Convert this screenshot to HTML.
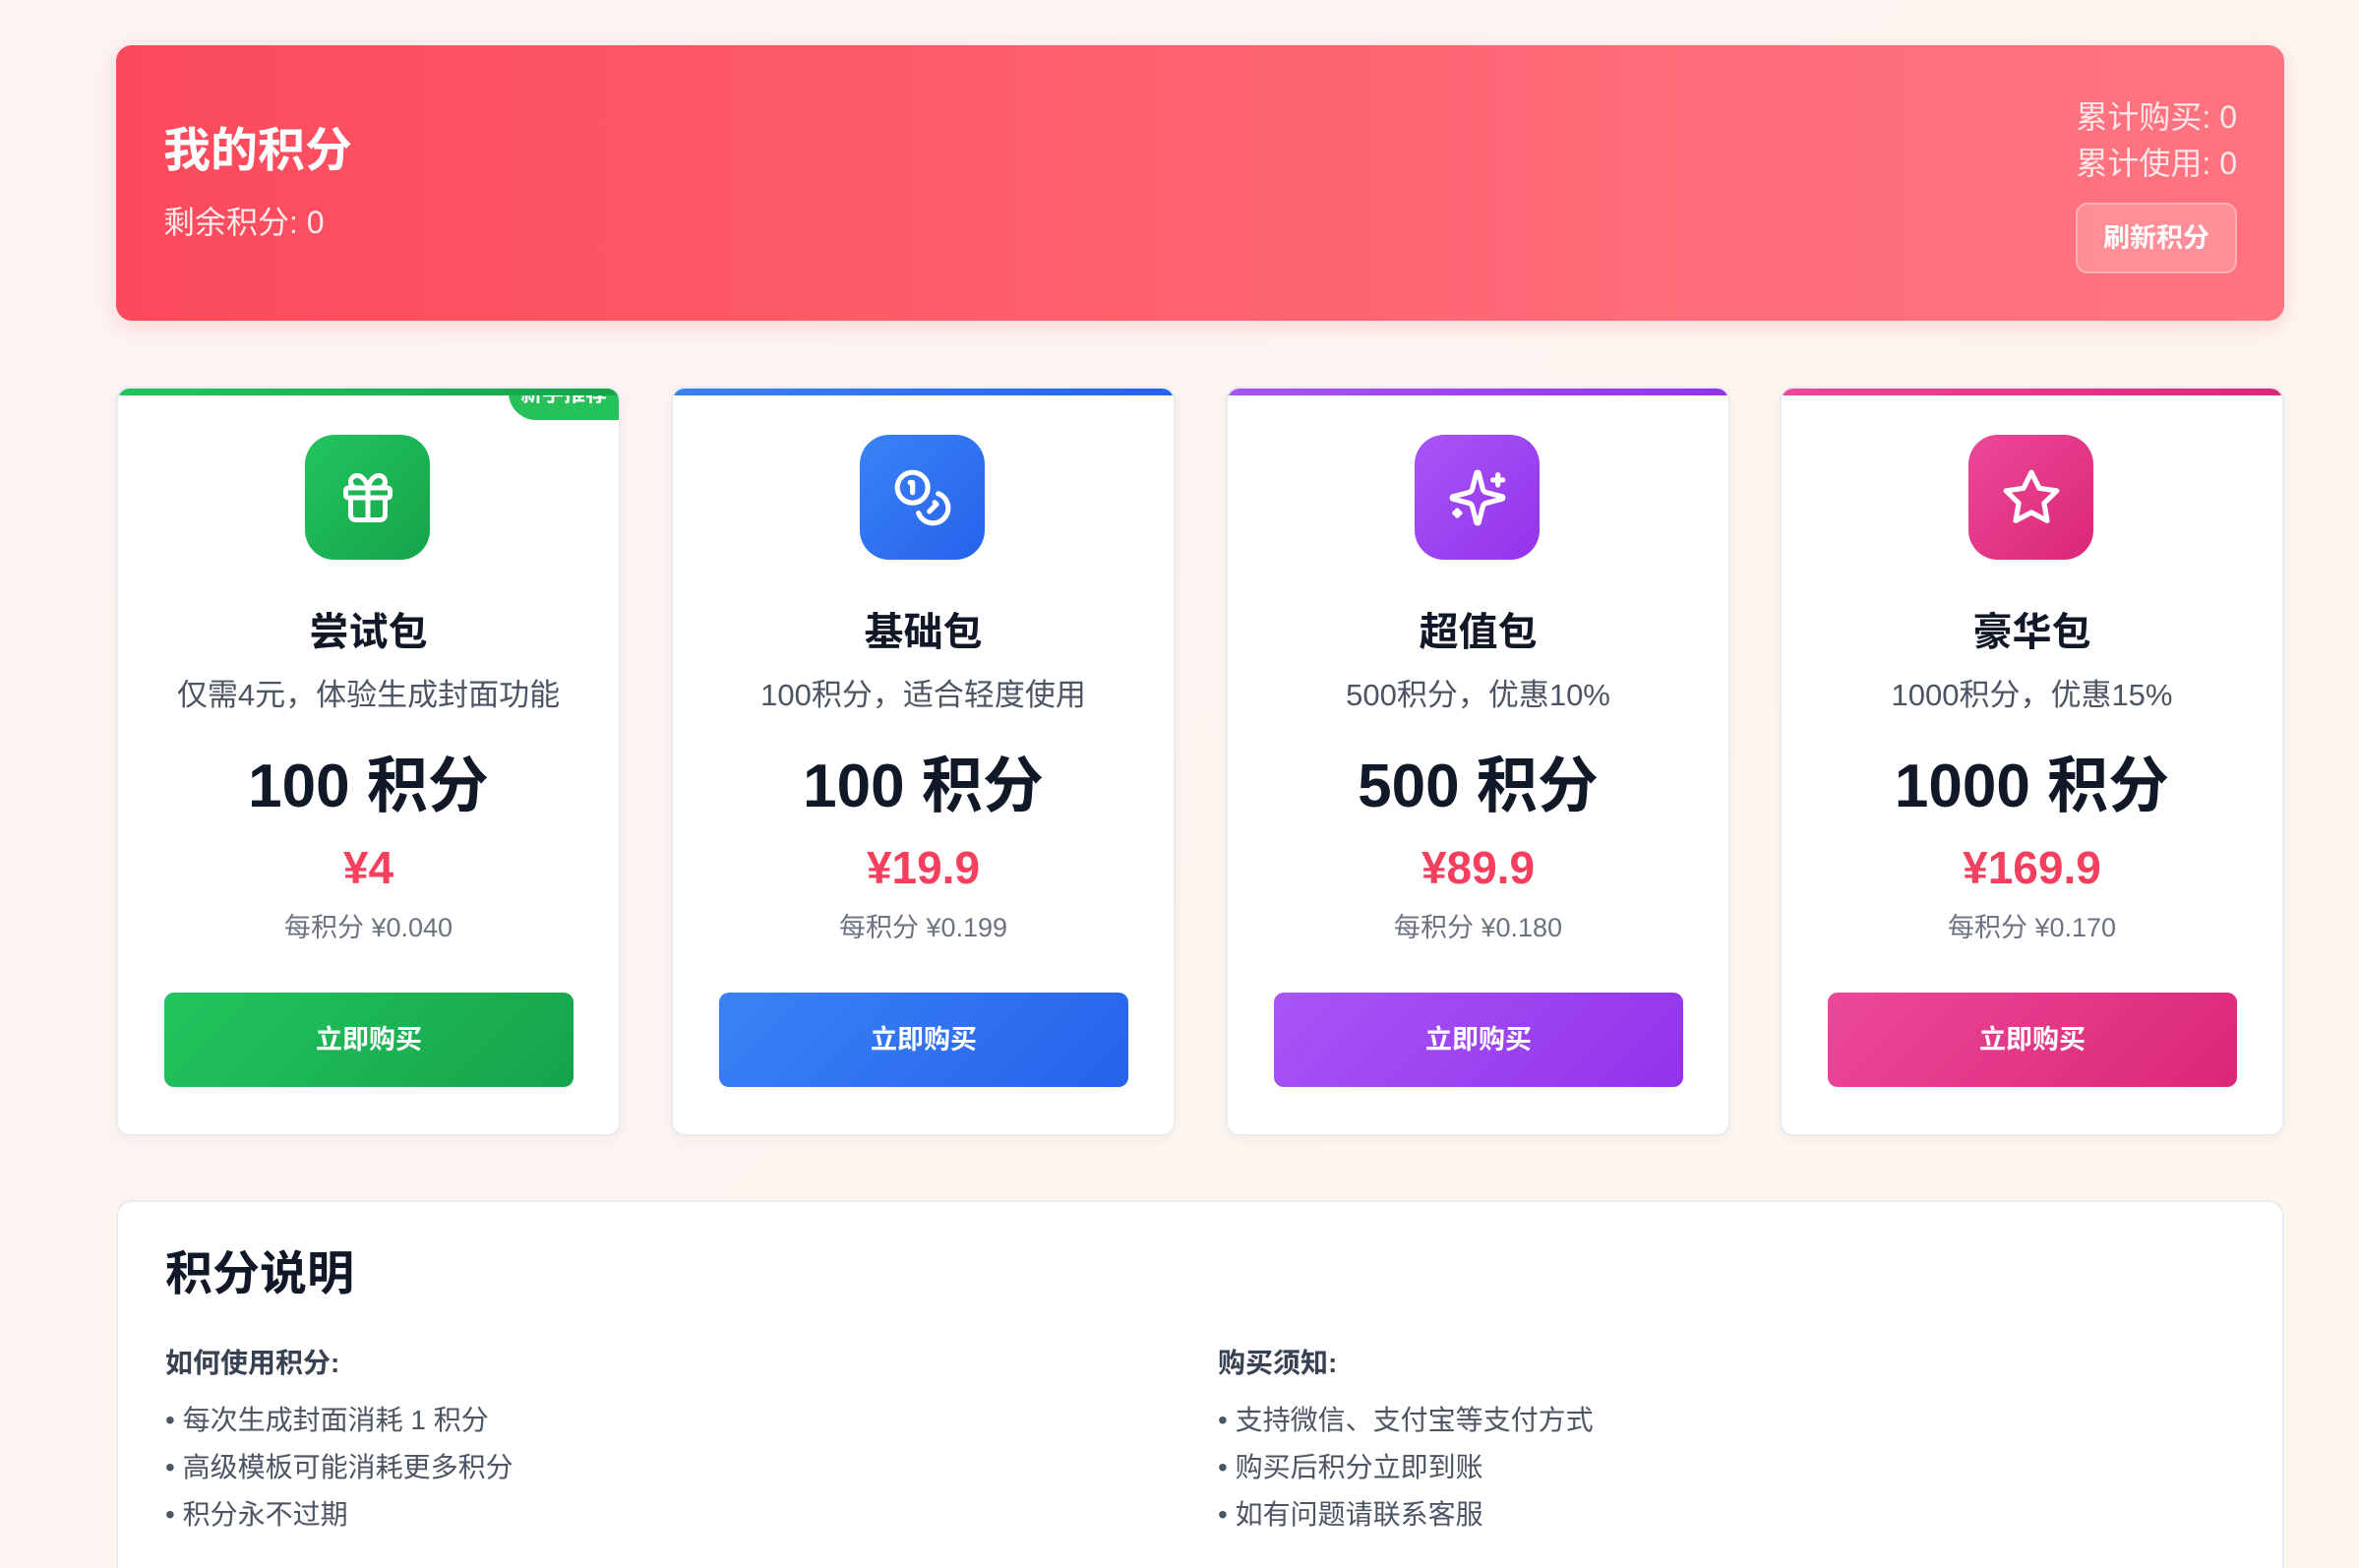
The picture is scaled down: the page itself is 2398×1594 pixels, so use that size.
<!DOCTYPE html>
<html style="height:1594px;overflow:hidden"><head><meta charset="utf-8"><style>
*{box-sizing:border-box;margin:0;padding:0}
body{width:2398px;height:1594px;overflow:hidden;background:linear-gradient(135deg,#fdf3f3,#fdf6ee);font-family:"Liberation Sans","Noto Sans CJK SC",sans-serif;position:relative}
.hdr{position:absolute;left:118px;top:46px;width:2204px;height:280px;border-radius:16px;background:linear-gradient(90deg,#fb4a5c,#ff6b78 70%,#ff7480);box-shadow:0 6px 20px rgba(240,80,90,.18);color:#fff}
.hdr h1{position:absolute;left:48px;top:78px;font-size:48px;font-weight:700;line-height:60px}
.hdr .rem{position:absolute;left:48px;top:160px;font-size:32px;line-height:40px;color:#ffe9ea}
.hdr .r{position:absolute;right:48px;top:50px;text-align:right;font-size:32px;line-height:47px;color:#ffe6e8}
.hdr .btn{position:absolute;right:48px;top:160px;width:164px;height:72px;border-radius:12px;background:rgba(255,255,255,.2);border:2px solid rgba(255,255,255,.3);font-size:27px;font-weight:700;line-height:68px;text-align:center;color:#fff}
.card{position:absolute;top:393px;width:513px;height:762px;background:#fff;border:2px solid #e8ebf0;border-radius:14px;overflow:hidden;box-shadow:0 4px 12px rgba(0,0,0,.04);text-align:center}
.card .bar{position:absolute;left:0;top:0;right:0;height:7px;z-index:2}
.ic{position:absolute;left:190px;top:47px;width:127px;height:127px;border-radius:30px;display:flex;align-items:center;justify-content:center}
.card h2{position:absolute;left:0;right:0;top:220px;font-size:40px;line-height:56px;color:#111827;font-weight:700}
.card .d{position:absolute;left:0;right:0;top:292px;font-size:31px;line-height:40px;color:#4b5563}
.card .p{position:absolute;left:0;right:0;top:368px;font-size:62px;line-height:74px;color:#111827;font-weight:700}
.card .pr{position:absolute;left:0;right:0;top:458px;font-size:46px;line-height:58px;color:#f43f5e;font-weight:700}
.card .u{position:absolute;left:0;right:0;top:530px;font-size:27px;line-height:36px;color:#6b7280}
.card .b{position:absolute;left:47px;top:614px;width:416px;height:96px;border-radius:10px;color:#fff;font-size:27px;font-weight:700;line-height:96px}
.badge{position:absolute;right:0;top:-6px;width:112px;height:38px;background:#27c15a;border-bottom-left-radius:28px;color:#fff;font-size:22px;font-weight:700;line-height:24px;z-index:1}
.g{background:linear-gradient(135deg,#22c55e,#16a34a)}
.bl{background:linear-gradient(135deg,#3b82f6,#2563eb)}
.pu{background:linear-gradient(135deg,#a855f7,#9333ea)}
.pk{background:linear-gradient(135deg,#ec4899,#db2777)}
.info{position:absolute;left:118px;top:1220px;width:2204px;height:374px;background:#fff;border:2px solid #e8ebf0;border-bottom:none;border-radius:16px 16px 0 0}
.info h3{position:absolute;left:48px;top:44px;font-size:48px;line-height:60px;color:#111827;font-weight:700}
.col{position:absolute;top:144px;font-size:28px;color:#374151}
.col .t{font-weight:700;line-height:40px;margin-bottom:14px;color:#374151}
.col div.li{line-height:48px;color:#4b5563}
</style></head><body>
<div class="hdr"><h1>我的积分</h1><div class="rem">剩余积分: 0</div>
<div class="r">累计购买: 0<br>累计使用: 0</div><div class="btn">刷新积分</div></div>

<div class="card" style="left:118px"><div class="bar g"></div><div class="badge">新手推荐</div>
<div class="ic g"><svg width="60" height="60" viewBox="0 0 24 24" fill="none" stroke="#fff" stroke-width="2" stroke-linecap="round" stroke-linejoin="round"><rect x="3" y="8" width="18" height="4" rx="1"/><path d="M12 8v13M19 12v7a2 2 0 0 1-2 2H7a2 2 0 0 1-2-2v-7M7.5 8a2.5 2.5 0 0 1 0-5C11 3 12 8 12 8s1-5 4.5-5a2.5 2.5 0 0 1 0 5"/></svg></div>
<h2>尝试包</h2><div class="d">仅需4元，体验生成封面功能</div><div class="p">100 积分</div><div class="pr">¥4</div><div class="u">每积分 ¥0.040</div><div class="b g">立即购买</div></div>

<div class="card" style="left:682px"><div class="bar bl"></div>
<div class="ic bl"><svg width="62" height="62" viewBox="0 0 24 24" fill="none" stroke="#fff" stroke-width="2" stroke-linecap="round" stroke-linejoin="round"><circle cx="8" cy="8" r="6"/><path d="M18.09 10.37A6 6 0 1 1 10.34 18M7 6h1v4M16.71 13.88l.7.71-2.82 2.82"/></svg></div>
<h2>基础包</h2><div class="d">100积分，适合轻度使用</div><div class="p">100 积分</div><div class="pr">¥19.9</div><div class="u">每积分 ¥0.199</div><div class="b bl">立即购买</div></div>

<div class="card" style="left:1246px"><div class="bar pu"></div>
<div class="ic pu"><svg width="62" height="62" viewBox="0 0 24 24" fill="none" stroke="#fff" stroke-width="2" stroke-linecap="round" stroke-linejoin="round"><path d="M9.94 15.5A2 2 0 0 0 8.5 14.06l-6.14-1.58a.5.5 0 0 1 0-.96L8.5 9.94A2 2 0 0 0 9.94 8.5l1.58-6.14a.5.5 0 0 1 .96 0l1.58 6.14A2 2 0 0 0 15.5 9.94l6.14 1.58a.5.5 0 0 1 0 .96L15.5 14.06a2 2 0 0 0-1.44 1.44l-1.58 6.14a.5.5 0 0 1-.96 0z"/><path d="M20 3v4M22 5h-4M4 17v2M5 18H3"/></svg></div>
<h2>超值包</h2><div class="d">500积分，优惠10%</div><div class="p">500 积分</div><div class="pr">¥89.9</div><div class="u">每积分 ¥0.180</div><div class="b pu">立即购买</div></div>

<div class="card" style="left:1809px"><div class="bar pk"></div>
<div class="ic pk"><svg width="62" height="62" viewBox="0 0 24 24" fill="none" stroke="#fff" stroke-width="2" stroke-linecap="round" stroke-linejoin="round"><path d="M12 2l3.09 6.26L22 9.27l-5 4.87 1.18 6.88L12 17.77l-6.18 3.25L7 14.14 2 9.27l6.91-1.01z"/></svg></div>
<h2>豪华包</h2><div class="d">1000积分，优惠15%</div><div class="p">1000 积分</div><div class="pr">¥169.9</div><div class="u">每积分 ¥0.170</div><div class="b pk">立即购买</div></div>

<div class="info"><h3>积分说明</h3>
<div class="col" style="left:48px"><div class="t">如何使用积分:</div><div class="li">•&nbsp;每次生成封面消耗 1 积分</div><div class="li">•&nbsp;高级模板可能消耗更多积分</div><div class="li">•&nbsp;积分永不过期</div></div>
<div class="col" style="left:1118px"><div class="t">购买须知:</div><div class="li">•&nbsp;支持微信、支付宝等支付方式</div><div class="li">•&nbsp;购买后积分立即到账</div><div class="li">•&nbsp;如有问题请联系客服</div></div>
</div>
</body></html>
